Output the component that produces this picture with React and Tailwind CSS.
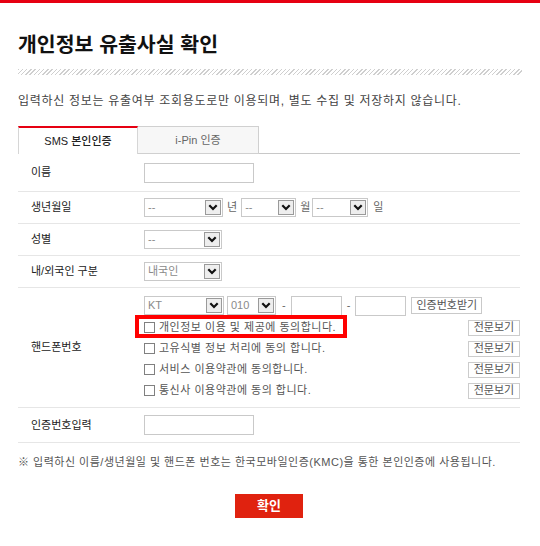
import React from "react";

const font = "font-['Liberation_Sans','Noto_Sans_CJK_KR',sans-serif]";

const Chevron = () => (
  <svg width="10" height="7" viewBox="0 0 10 7">
    <path d="M1.3 1.3 L5 5 L8.7 1.3" stroke="#111" strokeWidth="2.2" fill="none" />
  </svg>
);

const Select = ({ w, value }) => (
  <div className={`flex h-[19px] items-center justify-between border border-[#c9c9c9] bg-white pl-[3px] ${w}`}>
    <span className="text-[11px] leading-none text-[#8a8a8a]">{value}</span>
    <span className="mr-px flex h-[15px] w-[16px] items-center justify-center border border-[#9a9a9a] bg-[#eeeeee]">
      <Chevron />
    </span>
  </div>
);

const Row = ({ label, className = "", children }) => (
  <div className={`flex border-b border-[#e6e6e6] ${className}`}>
    <div className="flex w-[126px] shrink-0 items-center pl-[13px] text-[11px] text-[#222]">
      {label}
    </div>
    {children}
  </div>
);

const Agree = ({ text, boxed }) => (
  <div className="relative flex h-[21px] items-center justify-between">
    {boxed && (
      <div className="absolute left-[-9px] top-[-2px] h-[23px] w-[212px] border-4 border-[#ff0000]" />
    )}
    <div className="flex items-center">
      <span className="h-[11px] w-[11px] border border-[#808080] bg-white" />
      <span className="ml-[4px] text-[11px] tracking-[0.5px] text-[#555]">{text}</span>
    </div>
    <button className="flex h-[16px] w-[52px] items-center justify-center border border-[#cccccc] bg-white text-[11px] leading-none text-[#555]">
      전문보기
    </button>
  </div>
);

export default function App() {
  return (
    <div className={`min-h-[546px] w-[540px] bg-white ${font}`}>
      <div className="h-[3px] bg-[#e60012]" />

      <div className="pl-[18px] pr-[20px] pt-[30px]">
        <h1 className="text-[20.5px] font-bold leading-[24px] text-[#111]">
          개인정보 유출사실 확인
        </h1>
        <div className="mt-[12px] mr-[-2px] h-[6px] bg-[repeating-linear-gradient(135deg,#cfcfcf_0px,#cfcfcf_1px,transparent_1px,transparent_3px)]" />
        <p className="mt-[18px] text-[12px] leading-[16px] tracking-[0.7px] text-[#444]">
          입력하신 정보는 유출여부 조회용도로만 이용되며, 별도 수집 및 저장하지 않습니다.
        </p>

        {/* tabs */}
        <div className="mt-[17px] flex items-end">
          <div className="flex h-[28px] w-[120px] items-center justify-center border-x border-t-2 border-x-[#d6d6d6] border-t-[#e60012] bg-white text-[11px] font-medium text-[#222]">
            SMS 본인인증
          </div>
          <div className="flex h-[28px] w-[121px] items-center justify-center border border-l-0 border-[#d0d0d0] bg-[#f7f7f7] text-[11px] text-[#666]">
            i-Pin 인증
          </div>
          <div className="flex-1 border-b border-[#c8c8c8]" />
        </div>

        <Row label="이름" className="h-[38px]">
          <div className="flex items-center">
            <div className="h-[20px] w-[110px] border border-[#c9c9c9]" />
          </div>
        </Row>

        <Row label="생년월일" className="h-[32px]">
          <div className="flex items-center text-[11px] text-[#666]">
            <Select w="w-[79px]" value="--" />
            <span className="ml-[4px] mr-[4px]">년</span>
            <Select w="w-[55px]" value="--" />
            <span className="ml-[4px] mr-[2px]">월</span>
            <Select w="w-[56px]" value="--" />
            <span className="ml-[5px]">일</span>
          </div>
        </Row>

        <Row label="성별" className="h-[32px]">
          <div className="flex items-center">
            <Select w="w-[78px]" value="--" />
          </div>
        </Row>

        <Row label="내/외국인 구분" className="h-[32px]">
          <div className="flex items-center">
            <Select w="w-[78px]" value="내국인" />
          </div>
        </Row>

        <Row label="핸드폰번호" className="h-[120px]">
          <div className="flex flex-1 flex-col pt-[8px]">
            <div className="flex h-[19px] items-center text-[11px] text-[#666]">
              <Select w="w-[80px]" value="KT" />
              <div className="ml-[3px]">
                <Select w="w-[49px]" value="010" />
              </div>
              <span className="ml-[6px] mr-[5px]">-</span>
              <div className="h-[20px] w-[51px] border border-[#c9c9c9]" />
              <span className="mx-[5px]">-</span>
              <div className="h-[20px] w-[51px] border border-[#c9c9c9]" />
              <button className="ml-[5px] flex h-[17px] w-[71px] items-center justify-center border border-[#c9c9c9] bg-white text-[11px] leading-none text-[#555]">
                인증번호받기
              </button>
            </div>
            <div className="mt-[2px]">
              <Agree text="개인정보 이용 및 제공에 동의합니다." boxed />
              <Agree text="고유식별 정보 처리에 동의 합니다." />
              <Agree text="서비스 이용약관에 동의합니다." />
              <Agree text="통신사 이용약관에 동의 합니다." />
            </div>
          </div>
        </Row>

        <Row label="인증번호입력" className="h-[35px]">
          <div className="flex items-center">
            <div className="h-[20px] w-[110px] border border-[#c9c9c9]" />
          </div>
        </Row>

        <p className="mt-[11px] text-[11px] leading-[16px] tracking-[0.5px] text-[#555]">
          ※ 입력하신 이름/생년월일 및 핸드폰 번호는 한국모바일인증(KMC)을 통한 본인인증에 사용됩니다.
        </p>

        <div className="mt-[24px] flex justify-center">
          <button className="h-[24px] w-[68px] bg-[#e0220f] text-[13px] font-bold text-white">
            확인
          </button>
        </div>
      </div>
    </div>
  );
}
